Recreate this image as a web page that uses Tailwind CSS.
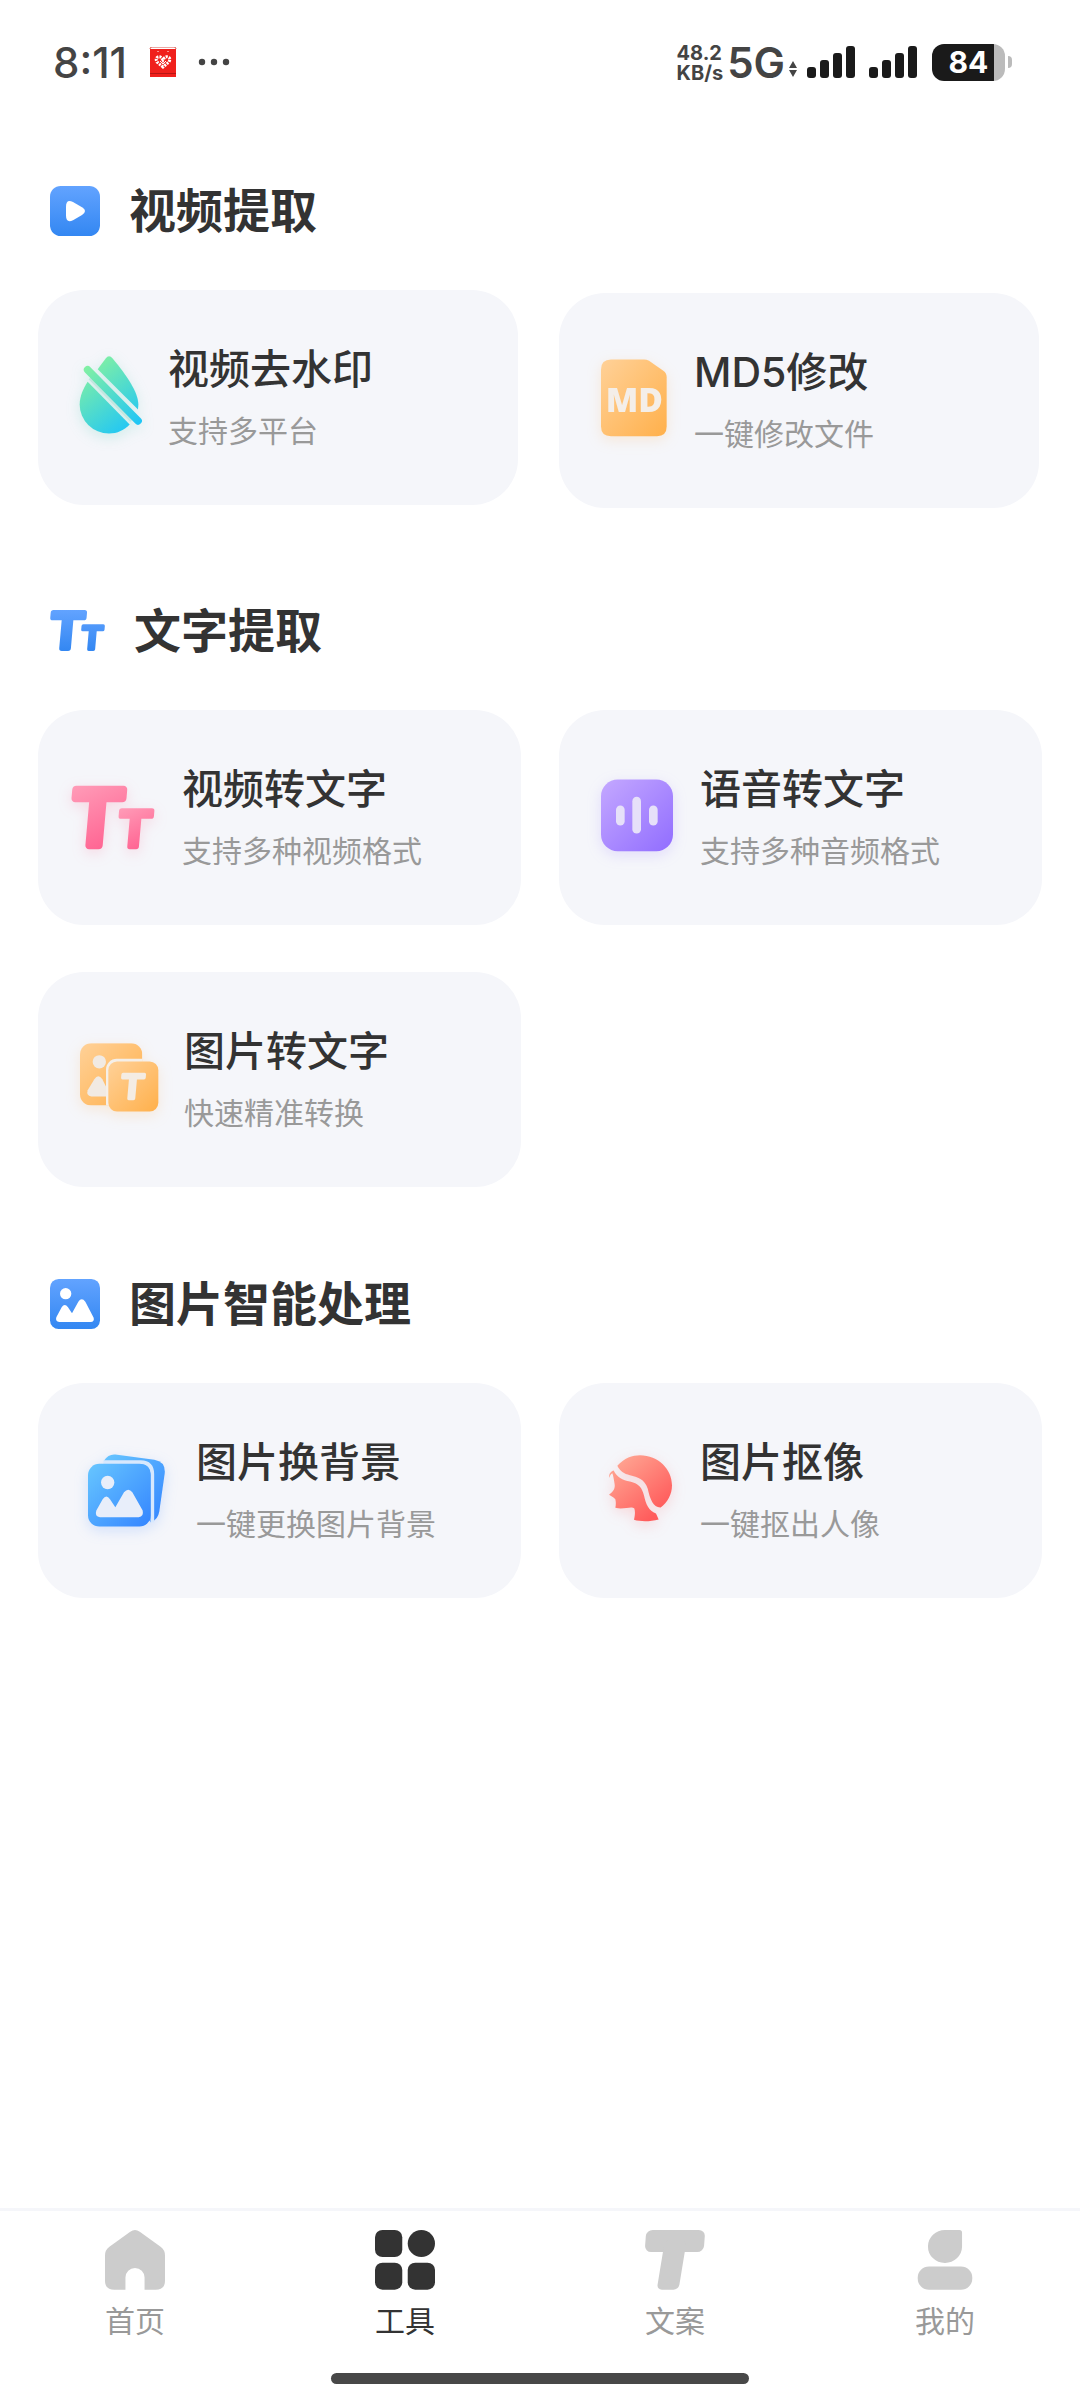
<!DOCTYPE html>
<html lang="zh-CN">
<head>
    <meta charset="UTF-8">
    <meta name="viewport" content="width=device-width, initial-scale=1.0">
    <title>工具</title>
    <script src="https://cdn.jsdelivr.net/npm/@tailwindcss/browser@4"></script>
</head>
<body class="flex min-h-screen flex-col bg-white font-['Inter','Noto_Sans_CJK_SC',sans-serif] text-[#333]">
    <!-- Status bar -->
    <header class="flex h-[124px] items-center justify-between pl-[53px] pr-[68px] text-[#444]">
        <div class="flex items-center">
            <span class="text-[42px] font-medium">8:11</span>
            <svg class="ml-[22px] h-[30px] w-[28px]" viewBox="0 0 28 30">
                <path d="M1 2 Q1 0 3 0 H25 Q27 0 27 2" fill="none" stroke="#d9534a" />
                <rect x="1" y="2" width="26" height="28" fill="#f0201c" />
                <rect x="1" y="26" width="26" height="1" fill="#b81512" />
                <path d="M9 4v1M19 4v1" stroke="#fff" />
                <path d="M14 20 L8 15 Q6 11 9 10 Q12 9 14 13 Q16 9 19 10 Q22 11 20 15 Z" fill="none" stroke="#fff" stroke-width="3" stroke-dasharray="2 1" />
                <path d="M11 14 L14 17 L17 14" fill="none" stroke="#fff" />
            </svg>
            <svg class="ml-[21px] h-[8px] w-[32px]" viewBox="0 0 32 8" fill="#444">
                <circle cx="4" cy="4" r="3.2" />
                <circle cx="16" cy="4" r="3.2" />
                <circle cx="28" cy="4" r="3.2" />
            </svg>
        </div>
        <div class="flex items-center">
            <div class="pt-[2px] text-[20px] leading-[20px] font-bold">
                <p>48.2</p>
                <p>KB/s</p>
            </div>
            <span class="ml-[4px] text-[42px] font-semibold">5G</span>
            <svg class="ml-[4px] mt-[14px] h-[16px] w-[8px]" viewBox="0 0 8 16" fill="#444">
                <path d="M4 0 L8 7 H0 Z M4 16 L8 9 H0 Z" />
            </svg>
            <svg class="ml-[10px] h-[32px] w-[48px]" viewBox="0 0 48 32" fill="#1a1a1a">
                <rect x="0" y="21" width="9" height="11" rx="3" />
                <rect x="13" y="14" width="9" height="18" rx="3" />
                <rect x="26" y="7" width="9" height="25" rx="3" />
                <rect x="39" y="0" width="9" height="32" rx="3" />
            </svg>
            <svg class="ml-[14px] h-[32px] w-[48px]" viewBox="0 0 48 32" fill="#1a1a1a">
                <rect x="0" y="21" width="9" height="11" rx="3" />
                <rect x="13" y="14" width="9" height="18" rx="3" />
                <rect x="26" y="7" width="9" height="25" rx="3" />
                <rect x="39" y="0" width="9" height="32" rx="3" />
            </svg>
            <div class="ml-[15px] flex h-[37px] w-[73px] items-center justify-center overflow-hidden rounded-[12px] bg-linear-to-r from-[#1a1a1a] from-85% to-[#bbb] to-85% text-[30px] font-bold text-white">84</div>
            <div class="ml-[3px] h-[12px] w-[4px] rounded-r-full bg-[#bbb]"></div>
        </div>
    </header>

    <main class="flex-1 pt-[62px]">
        <!-- 视频提取 -->
        <section>
            <div class="mb-[54px] flex h-[50px] items-center gap-[29px] pl-[50px]">
                <svg class="h-[50px] w-[50px]" viewBox="150 498 150 150">
                    <defs>
                        <linearGradient id="blueV" x1="0" y1="0" x2="0" y2="1">
                            <stop offset="0" stop-color="#62a3ff" />
                            <stop offset="1" stop-color="#3387f2" />
                        </linearGradient>
                    </defs>
                    <rect x="150" y="498" width="150" height="150" rx="32" fill="url(#blueV)" />
                    <path d="M198 560 Q198 536 219 546 L246 562 Q264 573 246 585 L219 601 Q198 611 198 586 Z" fill="#fff" />
                </svg>
                <h2 class="text-[47px] leading-[50px] font-bold">视频提取</h2>
            </div>
            <div class="grid min-h-[218px] grid-cols-2 items-start gap-[41px] pl-[38px] pr-[41px]">
                <a href="#" class="flex h-[215px] items-center rounded-[46px] bg-[#f5f6fa] pl-[33px]">
                    <svg class="h-[90px] w-[97px] overflow-visible drop-shadow-[0_4px_7px_rgba(60,200,170,0.2)]" viewBox="123 217.5 291 270">
                        <defs>
                            <linearGradient id="drop" gradientUnits="userSpaceOnUse" x1="165" y1="250" x2="310" y2="440">
                                <stop offset="0" stop-color="#85f2a0" />
                                <stop offset="1" stop-color="#20c6f6" />
                            </linearGradient>
                        </defs>
                        <path d="M180 292 L305 420" stroke="#c3e6e0" stroke-width="12" />
                        <path d="M203 266 L227 234 Q237 221 248 234 C290 285 325 335 325 372 L324 387 Z" fill="url(#drop)" />
                        <path d="M173 304 L299 432 C283 449 262 459 237 459 A88 87 0 0 1 149 372 C149 348 160 324 173 304 Z" fill="url(#drop)" />
                        <path d="M173 268 L324 421" stroke="url(#drop)" stroke-width="23" stroke-linecap="round" />
                    </svg>
                    <div class="flex flex-col gap-[15px]">
                        <h3 class="text-[41px] leading-[52px] font-medium">视频去水印</h3>
                        <p class="text-[30px] leading-[42px] text-[#999]">支持多平台</p>
                    </div>
                </a>
                <a href="#" class="flex h-[215px] items-center self-end rounded-[46px] bg-[#f5f6fa] pl-[33px]">
                    <svg class="h-[90px] w-[102px] overflow-visible drop-shadow-[0_4px_7px_rgba(255,180,90,0.2)]" viewBox="126 226.5 306 270">
                        <defs>
                            <linearGradient id="orange" x1="0" y1="0" x2="1" y2="1">
                                <stop offset="0" stop-color="#ffd198" />
                                <stop offset="1" stop-color="#ffb04b" />
                            </linearGradient>
                        </defs>
                        <path d="M183 237 H282 Q290 237 297 241 L340 271 Q350 278 350 290 V438 Q350 467 321 467 H183 Q153 467 153 438 V267 Q153 237 183 237 Z" fill="url(#orange)" />
                        <text x="253" y="393" text-anchor="middle" class="font-['Open_Sans'] text-[101px] font-extrabold" fill="#f4eee8">MD</text>
                    </svg>
                    <div class="flex flex-col gap-[15px]">
                        <h3 class="text-[41px] leading-[52px] font-medium">MD5修改</h3>
                        <p class="text-[30px] leading-[42px] text-[#999]">一键修改文件</p>
                    </div>
                </a>
            </div>
        </section>

        <!-- 文字提取 -->
        <section class="mt-[98px]">
            <div class="mb-[54px] flex h-[50px] items-center gap-[29px] pl-[50px]">
                <svg class="h-[50px] w-[55px]" viewBox="60 48 165 150">
                    <defs>
                        <linearGradient id="blueT" gradientUnits="userSpaceOnUse" x1="0" y1="60" x2="0" y2="183">
                            <stop offset="0" stop-color="#62a3ff" />
                            <stop offset="1" stop-color="#3387f2" />
                        </linearGradient>
                    </defs>
                    <g transform="skewX(-5)" fill="url(#blueT)">
                        <rect x="68" y="60" width="109" height="31" rx="8" />
                        <rect x="103" y="70" width="35" height="113" rx="8" />
                        <rect x="164" y="103" width="70" height="21" rx="5" />
                        <rect x="187" y="110" width="24" height="73" rx="5" />
                    </g>
                </svg>
                <h2 class="text-[47px] leading-[50px] font-bold">文字提取</h2>
            </div>
            <div class="grid grid-cols-2 gap-x-[38px] gap-y-[47px] px-[38px]">
                <a href="#" class="flex h-[215px] items-center rounded-[46px] bg-[#f5f6fa] pl-[33px]">
                    <svg class="h-[90px] w-[111px] overflow-visible drop-shadow-[0_4px_7px_rgba(255,100,140,0.2)]" viewBox="123 547.5 333 270">
                        <defs>
                            <linearGradient id="pink" gradientUnits="userSpaceOnUse" x1="190" y1="580" x2="290" y2="776">
                                <stop offset="0" stop-color="#ff9cb8" />
                                <stop offset="1" stop-color="#ff6492" />
                            </linearGradient>
                            <linearGradient id="pinkSmall" gradientUnits="userSpaceOnUse" x1="330" y1="650" x2="394" y2="776">
                                <stop offset="0" stop-color="#ff9cb8" />
                                <stop offset="1" stop-color="#ff6492" />
                            </linearGradient>
                        </defs>
                        <g transform="skewX(-5)">
                            <g fill="url(#pink)">
                                <rect x="179" y="586" width="165" height="49" rx="12" />
                                <rect x="233" y="605" width="52" height="171" rx="12" />
                            </g>
                            <g fill="url(#pinkSmall)">
                                <rect x="325" y="653" width="106" height="32" rx="8" />
                                <rect x="359" y="665" width="35" height="111" rx="8" />
                            </g>
                        </g>
                    </svg>
                    <div class="flex flex-col gap-[15px]">
                        <h3 class="text-[41px] leading-[52px] font-medium">视频转文字</h3>
                        <p class="text-[30px] leading-[42px] text-[#999]">支持多种视频格式</p>
                    </div>
                </a>
                <a href="#" class="flex h-[215px] items-center rounded-[46px] bg-[#f5f6fa] pl-[33px]">
                    <svg class="h-[90px] w-[108px] overflow-visible drop-shadow-[0_4px_7px_rgba(150,120,255,0.2)]" viewBox="126 217.5 324 270">
                        <defs>
                            <linearGradient id="purple" x1="0" y1="0" x2="1" y2="1">
                                <stop offset="0" stop-color="#c4a8ff" />
                                <stop offset="1" stop-color="#916dff" />
                            </linearGradient>
                        </defs>
                        <rect x="153" y="237" width="216" height="215" rx="50" fill="url(#purple)" />
                        <g fill="#e6e0f9">
                            <rect x="198" y="315" width="26" height="60" rx="13" />
                            <rect x="247" y="289" width="26" height="110" rx="13" />
                            <rect x="297" y="315" width="26" height="60" rx="13" />
                        </g>
                    </svg>
                    <div class="flex flex-col gap-[15px]">
                        <h3 class="text-[41px] leading-[52px] font-medium">语音转文字</h3>
                        <p class="text-[30px] leading-[42px] text-[#999]">支持多种音频格式</p>
                    </div>
                </a>
                <a href="#" class="flex h-[215px] items-center rounded-[46px] bg-[#f5f6fa] pl-[33px]">
                    <svg class="h-[90px] w-[113px] overflow-visible drop-shadow-[0_4px_7px_rgba(255,180,90,0.2)]" viewBox="123 223.5 339 270">
                        <defs>
                            <clipPath id="photo">
                                <rect x="150" y="248" width="187" height="187" rx="34" />
                            </clipPath>
                        </defs>
                        <g clip-path="url(#photo)">
                            <rect x="150" y="248" width="187" height="187" fill="url(#orange)" />
                            <circle cx="208" cy="304" r="20" fill="#f1eae3" />
                            <path d="M193 356 Q205 339 217 356 L243 408 H184 Q168 405 173 389 Z" fill="#f1eae3" />
                            <rect x="228" y="295" width="164" height="166" rx="32" fill="#f5efe8" />
                        </g>
                        <rect x="235" y="303" width="150" height="150" rx="26" fill="url(#orange)" />
                        <g transform="skewX(-5)" fill="#f4ece3">
                            <rect x="304" y="337" width="74" height="20" rx="5" />
                            <rect x="328" y="342" width="24" height="77" rx="5" />
                        </g>
                    </svg>
                    <div class="flex flex-col gap-[15px]">
                        <h3 class="text-[41px] leading-[52px] font-medium">图片转文字</h3>
                        <p class="text-[30px] leading-[42px] text-[#999]">快速精准转换</p>
                    </div>
                </a>
            </div>
        </section>

        <!-- 图片智能处理 -->
        <section class="mt-[92px]">
            <div class="mb-[54px] flex h-[50px] items-center gap-[29px] pl-[50px]">
                <svg class="h-[50px] w-[50px]" viewBox="60 57 150 150">
                    <rect x="60" y="57" width="150" height="150" rx="26" fill="url(#blueV)" />
                    <g fill="#fff">
                        <circle cx="107" cy="101" r="17" />
                        <path d="M79 172 L95 142 Q104 128 114 142 L126 160 L145 125 Q155 111 166 125 L191 173 Q194 185 182 186 H88 Q75 184 79 172 Z" />
                    </g>
                </svg>
                <h2 class="text-[47px] leading-[50px] font-bold">图片智能处理</h2>
            </div>
            <div class="grid grid-cols-2 gap-[38px] px-[38px]">
                <a href="#" class="flex h-[215px] items-center rounded-[46px] bg-[#f5f6fa] pl-[33px]">
                    <svg class="h-[90px] w-[125px] overflow-visible drop-shadow-[0_4px_7px_rgba(70,140,255,0.2)]" viewBox="123 556.5 375 270">
                        <defs>
                            <linearGradient id="sky" x1="0" y1="0" x2="1" y2="1">
                                <stop offset="0" stop-color="#67c6ff" />
                                <stop offset="1" stop-color="#3485ff" />
                            </linearGradient>
                        </defs>
                        <path d="M222 601 Q235 580 256 582 L373 598 Q408 604 404 640 L388 752 Q384 778 362 785 Z" fill="url(#sky)" />
                        <path d="M220 605 H332 Q367 606 367 641 V785" fill="none" stroke="#d7e8fd" stroke-width="11" />
                        <rect x="174" y="610" width="188" height="188" rx="34" fill="url(#sky)" />
                        <g fill="#e8eefa">
                            <circle cx="233" cy="666" r="20" />
                            <path d="M199 750 L218 716 Q229 700 240 716 L256 740 L282 695 Q295 680 307 695 L338 750 Q342 769 326 770 H210 Q193 768 199 750 Z" />
                        </g>
                    </svg>
                    <div class="flex flex-col gap-[15px]">
                        <h3 class="text-[41px] leading-[52px] font-medium">图片换背景</h3>
                        <p class="text-[30px] leading-[42px] text-[#999]">一键更换图片背景</p>
                    </div>
                </a>
                <a href="#" class="flex h-[215px] items-center rounded-[46px] bg-[#f5f6fa] pl-[33px]">
                    <svg class="h-[90px] w-[108px] overflow-visible drop-shadow-[0_4px_7px_rgba(255,100,100,0.2)]" viewBox="126 226.5 324 270">
                        <defs>
                            <linearGradient id="coral" gradientUnits="userSpaceOnUse" x1="200" y1="270" x2="330" y2="420">
                                <stop offset="0" stop-color="#ffa592" />
                                <stop offset="1" stop-color="#ff5c5c" />
                            </linearGradient>
                        </defs>
                        <g fill="url(#coral)">
                            <path d="M202 286 C222 262 248 254 270 254 C325 254 366 296 366 344 C366 372 352 396 332 411 C310 412 300 386 293 354 C284 325 262 319 240 314 C222 311 210 302 202 286 Z" />
                            <path d="M178 322 C176 308 184 303 191 300 C200 320 218 329 240 333 C268 340 276 352 282 375 C288 402 296 421 318 429 L326 447 C300 454 272 454 252 448 C255 434 256 424 253 414 C244 406 222 418 196 412 C198 402 198 394 196 386 C190 380 184 378 177 373 C186 366 196 358 194 342 C192 328 190 316 187 308 C182 310 180 316 178 322 Z" />
                        </g>
                    </svg>
                    <div class="flex flex-col gap-[15px]">
                        <h3 class="text-[41px] leading-[52px] font-medium">图片抠像</h3>
                        <p class="text-[30px] leading-[42px] text-[#999]">一键抠出人像</p>
                    </div>
                </a>
            </div>
        </section>
    </main>

    <!-- Tab bar -->
    <footer class="border-t-[3px] border-[#f5f6fa] pt-[19px] pb-[16px]">
        <nav class="grid grid-cols-4 text-[30px] leading-[40px] text-[#999]">
            <a href="#" class="flex flex-col items-center gap-[11px]">
                <svg class="h-[60px] w-[60px]" viewBox="304 119 176 182" preserveAspectRatio="none" fill="#ccc">
                    <path d="M378 124 Q392 114 406 124 L467 170 Q480 180 480 196 V273 Q480 300 453 300 H420 V263 A28 29 0 0 0 364 263 V300 H331 Q304 300 304 273 V196 Q304 180 317 170 Z" />
                </svg>
                <span>首页</span>
            </a>
            <a href="#" class="flex flex-col items-center gap-[11px] text-[#333]">
                <svg class="h-[60px] w-[60px]" viewBox="1088 119 176 182" preserveAspectRatio="none" fill="#333">
                    <rect x="1088" y="119" width="80" height="82" rx="22" />
                    <ellipse cx="1224" cy="160" rx="40" ry="41" />
                    <rect x="1088" y="218" width="80" height="82" rx="22" />
                    <rect x="1184" y="218" width="80" height="82" rx="22" />
                </svg>
                <span>工具</span>
            </a>
            <a href="#" class="flex flex-col items-center gap-[11px]">
                <svg class="h-[60px] w-[60px]" viewBox="304 119 176 182" preserveAspectRatio="none" fill="#ccc">
                    <rect x="316" y="119" width="173" height="67" rx="19" transform="skewX(-4)" />
                    <rect x="386" y="150" width="64" height="150" rx="15" transform="skewX(-9)" />
                </svg>
                <span>文案</span>
            </a>
            <a href="#" class="flex flex-col items-center gap-[11px]">
                <svg class="h-[60px] w-[60px]" viewBox="1088 119 176 182" preserveAspectRatio="none" fill="#ccc">
                    <path d="M1176 119 H1218 Q1226 119 1226 127 V170 A50 50 0 1 1 1176 119 Z" />
                    <rect x="1096" y="230" width="160" height="70" rx="33" />
                </svg>
                <span>我的</span>
            </a>
        </nav>
        <div class="mx-auto mt-[32px] h-[11px] w-[418px] rounded-full bg-[#484848]"></div>
    </footer>
</body>
</html>
